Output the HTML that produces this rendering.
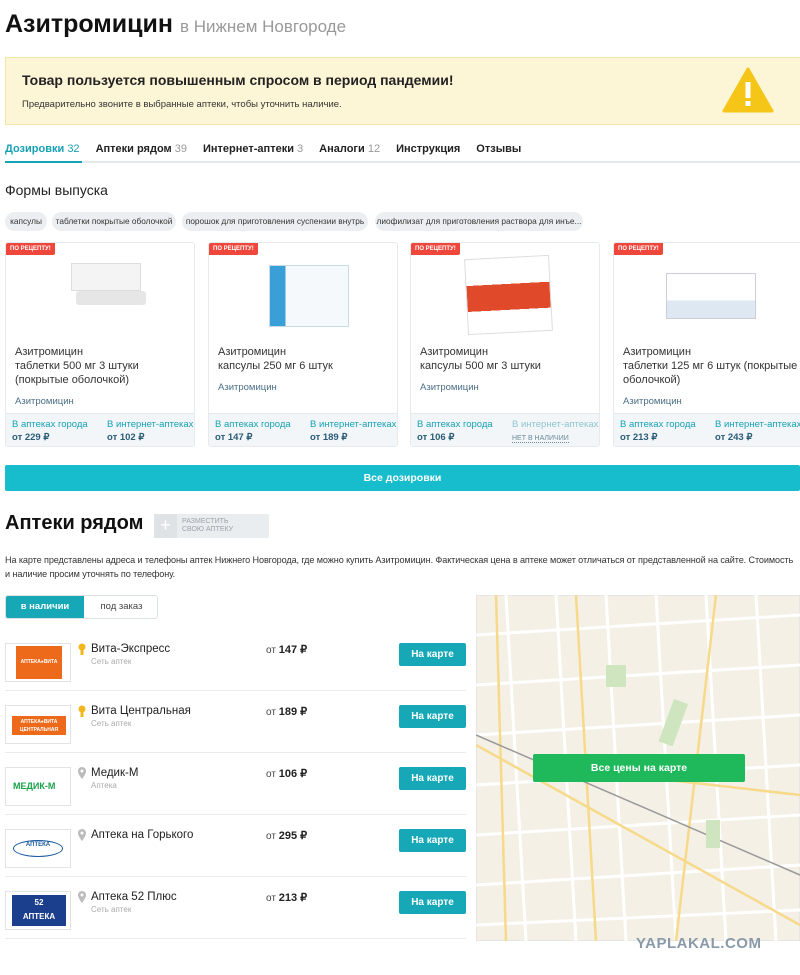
<!DOCTYPE html><html><head><meta charset="utf-8"><style>
*{box-sizing:border-box;margin:0;padding:0}
body{width:800px;height:975px;overflow:hidden;background:#fff;font-family:"Liberation Sans",sans-serif;color:#222;position:relative}
.a{position:absolute}
.tabs span.t{margin-right:16px}
.chip{position:absolute;top:212px;height:19px;background:#eceff1;border-radius:10px;font-size:8.3px;line-height:19px;text-align:center;color:#333;white-space:nowrap;overflow:hidden}
.card{position:absolute;top:242px;width:190px;height:205px;border:1px solid #e6eaec;border-radius:3px;overflow:hidden}
.badge{position:absolute;left:0;top:0;background:#f0473d;color:#fff;font-size:6px;font-weight:bold;padding:3px 4px;border-radius:0 0 2px 0}
.nm{position:absolute;left:9px;top:102px;font-size:11px;line-height:14px;color:#333;width:180px}
.lk{position:absolute;left:9px;font-size:9.5px;color:#4a6f85}
.bot{position:absolute;left:0;bottom:0;width:100%;height:33px;background:#f2f6f8;border-top:1px solid #e6eaec}
.bot div{position:absolute;top:4px;font-size:9.5px;color:#17a1b5;line-height:13px;white-space:nowrap}
.bot b{color:#2b5c77}
.row{position:absolute;left:5px;width:461px;height:62px;border-bottom:1px solid #e8ecee}
.logo{position:absolute;left:0;top:14px;width:66px;height:39px;border:1px solid #e3e3e3}
.pn{position:absolute;left:86px;top:14px;font-size:11.5px;color:#222}
.ps{position:absolute;left:86px;top:28px;font-size:8px;color:#aaa}
.pr{position:absolute;left:261px;top:14px;font-size:10px;color:#444}
.pr b{font-size:11px;color:#222}
.btn{position:absolute;left:394px;top:14px;width:67px;height:23px;background:#17a8b8;color:#fff;font-size:10px;font-weight:bold;text-align:center;line-height:23px;border-radius:2px}
.pin{position:absolute;left:73px;top:14px;width:8px;height:12px}
</style></head><body>
<div class="a" style="left:5px;top:10px;font-size:25px;font-weight:bold;color:#111">Азитромицин <span style="font-size:17px;font-weight:normal;color:#999">в Нижнем Новгороде</span></div>
<div class="a" style="left:5px;top:57px;width:800px;height:68px;background:#fdf6d6;border:1px solid #f3e6a6"></div>
<div class="a" style="left:22px;top:72px;font-size:14px;font-weight:bold;color:#222">Товар пользуется повышенным спросом в период пандемии!</div>
<div class="a" style="left:22px;top:99px;font-size:9.5px;color:#333">Предварительно звоните в выбранные аптеки, чтобы уточнить наличие.</div>
<svg class="a" style="left:722px;top:67px" width="52" height="46"><path d="M26 2 L50 44 L2 44 Z" fill="#f5c518" stroke="#f5c518" stroke-width="3" stroke-linejoin="round"/><rect x="23.5" y="15" width="5" height="16" fill="#fff"/><rect x="23.5" y="34" width="5" height="5" fill="#fff"/></svg>
<div class="a tabs" style="left:5px;top:143px;font-size:11px;font-weight:bold;white-space:nowrap">
<span class="t" style="color:#17a1b5">Дозировки <span style="font-weight:normal">32</span></span><span class="t">Аптеки рядом <span style="font-weight:normal;color:#999">39</span></span><span class="t">Интернет-аптеки <span style="font-weight:normal;color:#999">3</span></span><span class="t">Аналоги <span style="font-weight:normal;color:#999">12</span></span><span class="t">Инструкция</span><span>Отзывы</span></div>
<div class="a" style="left:5px;top:161px;width:795px;height:2px;background:#e6e9eb"></div>
<div class="a" style="left:5px;top:161px;width:77px;height:2px;background:#17a1b5"></div>
<div class="a" style="left:5px;top:182px;font-size:14px;color:#222">Формы выпуска</div>
<div class="chip" style="left:5px;width:42px">капсулы</div>
<div class="chip" style="left:52px;width:124px">таблетки покрытые оболочкой</div>
<div class="chip" style="left:182px;width:186px">порошок для приготовления суспензии внутрь</div>
<div class="chip" style="left:375px;width:208px">лиофилизат для приготовления раствора для инъе...</div>

<div class="card" style="left:5px"><div class="badge">ПО РЕЦЕПТУ!</div>
<div class="a" style="left:65px;top:20px;width:70px;height:28px;background:#f4f4f4;border:1px solid #ddd"></div><div class="a" style="left:70px;top:48px;width:70px;height:14px;background:#e6e6e6;border-radius:3px"></div>
<div class="nm">Азитромицин<br>таблетки 500 мг 3 штуки<br>(покрытые оболочкой)</div><div class="lk" style="top:153px">Азитромицин</div>
<div class="bot"><div style="left:6px">В аптеках города<br><b>от 229 ₽</b></div><div style="left:101px">В интернет-аптеках<br><b>от 102 ₽</b></div></div></div>
<div class="card" style="left:208px"><div class="badge">ПО РЕЦЕПТУ!</div>
<div class="a" style="left:60px;top:22px;width:80px;height:62px;background:linear-gradient(90deg,#3a9fd6 0 20%,#f6f9fc 20%);border:1px solid #c9dbe8"></div>
<div class="nm">Азитромицин<br>капсулы 250 мг 6 штук</div><div class="lk" style="top:139px">Азитромицин</div>
<div class="bot"><div style="left:6px">В аптеках города<br><b>от 147 ₽</b></div><div style="left:101px">В интернет-аптеках<br><b>от 189 ₽</b></div></div></div>
<div class="card" style="left:410px"><div class="badge">ПО РЕЦЕПТУ!</div>
<div class="a" style="left:55px;top:14px;width:85px;height:76px;background:linear-gradient(#fff 0 35%,#e0492a 35% 70%,#fff 70%);border:1px solid #ddd;transform:rotate(-3deg)"></div>
<div class="nm">Азитромицин<br>капсулы 500 мг 3 штуки</div><div class="lk" style="top:139px">Азитромицин</div>
<div class="bot"><div style="left:6px">В аптеках города<br><b>от 106 ₽</b></div><div style="left:101px;color:#8fc5cf">В интернет-аптеках<br><span style="font-size:7px;color:#6a8a9a;border-bottom:1px dotted">НЕТ В НАЛИЧИИ</span></div></div></div>
<div class="card" style="left:613px;width:190px"><div class="badge">ПО РЕЦЕПТУ!</div>
<div class="a" style="left:52px;top:30px;width:90px;height:46px;background:linear-gradient(#fff 0 60%,#dde8f2 60%);border:1px solid #ccd;"></div>
<div class="nm">Азитромицин<br>таблетки 125 мг 6 штук (покрытые<br>оболочкой)</div><div class="lk" style="top:153px">Азитромицин</div>
<div class="bot"><div style="left:6px">В аптеках города<br><b>от 213 ₽</b></div><div style="left:101px">В интернет-аптеках<br><b>от 243 ₽</b></div></div></div>

<div class="a" style="left:5px;top:465px;width:795px;height:26px;background:#17bccd;color:#fff;font-size:10.5px;font-weight:bold;text-align:center;line-height:26px;border-radius:2px">Все дозировки</div>
<div class="a" style="left:5px;top:512px;font-size:20px;font-weight:bold;color:#111">Аптеки рядом</div>
<div class="a" style="left:154px;top:514px;width:115px;height:24px;background:#eaedf0;border-radius:2px"></div>
<div class="a" style="left:154px;top:514px;width:23px;height:24px;background:#dfe3e6;color:#fff;font-size:18px;text-align:center;line-height:23px">+</div>
<div class="a" style="left:182px;top:518px;font-size:7px;line-height:8px;color:#9aa3aa">РАЗМЕСТИТЬ<br>СВОЮ АПТЕКУ</div>
<div class="a" style="left:5px;top:553px;width:800px;font-size:9.1px;line-height:14px;color:#333;letter-spacing:-0.1px">На карте представлены адреса и телефоны аптек Нижнего Новгорода, где можно купить Азитромицин. Фактическая цена в аптеке может отличаться от представленной на сайте. Стоимость<br>и наличие просим уточнять по телефону.</div>
<div class="a" style="left:5px;top:595px;width:153px;height:24px;border:1px solid #dde2e5;border-radius:3px;overflow:hidden"><div class="a" style="left:0;top:0;width:78px;height:24px;background:#17a8b8;color:#fff;font-size:9.5px;text-align:center;line-height:22px;font-weight:bold">в наличии</div><div class="a" style="left:78px;top:0;width:75px;font-size:9.5px;text-align:center;line-height:22px;color:#444">под заказ</div></div>

<div class="row" style="top:629px"><div class="logo"><div class="a" style="left:10px;top:2px;width:46px;height:33px;background:#ee6a1b;color:#fff;font-size:5px;font-weight:bold;text-align:center;line-height:33px">АПТЕКА●ВИТА</div></div><svg class="pin" viewBox="0 0 8 12"><circle cx="4" cy="4" r="3.5" fill="#f3b71c"/><rect x="2.5" y="6" width="3" height="6" fill="#f3b71c"/></svg><div class="pn">Вита-Экспресс</div><div class="ps">Сеть аптек</div><div class="pr">от <b>147 ₽</b></div><div class="btn">На карте</div></div>
<div class="row" style="top:691px"><div class="logo"><div class="a" style="left:6px;top:10px;width:54px;height:19px;background:#ee6a1b;color:#fff;font-size:5px;font-weight:bold;text-align:center;line-height:8px;padding-top:2px">АПТЕКА●ВИТА<br>ЦЕНТРАЛЬНАЯ</div></div><svg class="pin" viewBox="0 0 8 12"><circle cx="4" cy="4" r="3.5" fill="#f3b71c"/><rect x="2.5" y="6" width="3" height="6" fill="#f3b71c"/></svg><div class="pn">Вита Центральная</div><div class="ps">Сеть аптек</div><div class="pr">от <b>189 ₽</b></div><div class="btn">На карте</div></div>
<div class="row" style="top:753px"><div class="logo"><div class="a" style="left:7px;top:13px;font-size:9px;font-weight:bold;color:#1aa24a">МЕДИК-М</div></div><svg class="pin" viewBox="0 0 8 12"><path d="M4 0C1.8 0 0 1.8 0 4c0 3 4 8 4 8s4-5 4-8C8 1.8 6.2 0 4 0z" fill="#bbb"/><circle cx="4" cy="4" r="1.5" fill="#fff"/></svg><div class="pn">Медик-М</div><div class="ps">Аптека</div><div class="pr">от <b>106 ₽</b></div><div class="btn">На карте</div></div>
<div class="row" style="top:815px"><div class="logo"><div class="a" style="left:7px;top:10px;width:50px;height:17px;border:1.5px solid #1a5aa0;border-radius:50%;font-size:6px;color:#1a5aa0;text-align:center;line-height:9px;font-weight:bold">АПТЕКА</div></div><svg class="pin" viewBox="0 0 8 12"><path d="M4 0C1.8 0 0 1.8 0 4c0 3 4 8 4 8s4-5 4-8C8 1.8 6.2 0 4 0z" fill="#bbb"/><circle cx="4" cy="4" r="1.5" fill="#fff"/></svg><div class="pn">Аптека на Горького</div><div class="pr">от <b>295 ₽</b></div><div class="btn">На карте</div></div>
<div class="row" style="top:877px"><div class="logo"><div class="a" style="left:6px;top:3px;width:54px;height:31px;background:#1b3f8c;color:#fff;font-size:8px;font-weight:bold;text-align:center;line-height:14px;padding-top:1px">52<br>АПТЕКА</div></div><svg class="pin" viewBox="0 0 8 12"><path d="M4 0C1.8 0 0 1.8 0 4c0 3 4 8 4 8s4-5 4-8C8 1.8 6.2 0 4 0z" fill="#bbb"/><circle cx="4" cy="4" r="1.5" fill="#fff"/></svg><div class="pn">Аптека 52 Плюс</div><div class="ps">Сеть аптек</div><div class="pr">от <b>213 ₽</b></div><div class="btn">На карте</div></div>

<svg class="a" style="left:476px;top:595px" width="324" height="346"><rect width="324" height="346" fill="#f4f0e6" stroke="#ddd"/>
<g stroke="#fff" stroke-width="3" fill="none">
<path d="M0 40 L324 20 M0 90 L324 70 M0 140 L324 120 M0 190 L324 170 M0 240 L324 220 M0 290 L324 270 M0 330 L324 315"/>
<path d="M30 0 L50 346 M80 0 L100 346 M130 0 L150 346 M180 0 L200 346 M230 0 L250 346 M280 0 L300 346"/></g>
<g stroke="#f7d98a" stroke-width="2.5" fill="none"><path d="M20 0 L30 346 M0 150 L324 330 M60 170 L324 200 M100 0 L120 346 M240 0 L200 346"/></g>
<path d="M0 140 L324 280" stroke="#999" stroke-width="1.5"/>
<rect x="130" y="70" width="20" height="22" fill="#cfe5c0"/><rect x="190" y="105" width="15" height="45" fill="#cfe5c0" transform="rotate(20 197 127)"/><rect x="230" y="225" width="14" height="28" fill="#cfe5c0"/>
</svg>
<div class="a" style="left:533px;top:754px;width:212px;height:28px;background:#1fb85a;color:#fff;font-size:10.5px;font-weight:bold;text-align:center;line-height:28px;border-radius:2px">Все цены на карте</div>
<div class="a" style="left:636px;top:935px;font-size:15px;font-weight:bold;color:#8a9aa8;letter-spacing:0.5px">YAPLAKAL.COM</div>
</body></html>
